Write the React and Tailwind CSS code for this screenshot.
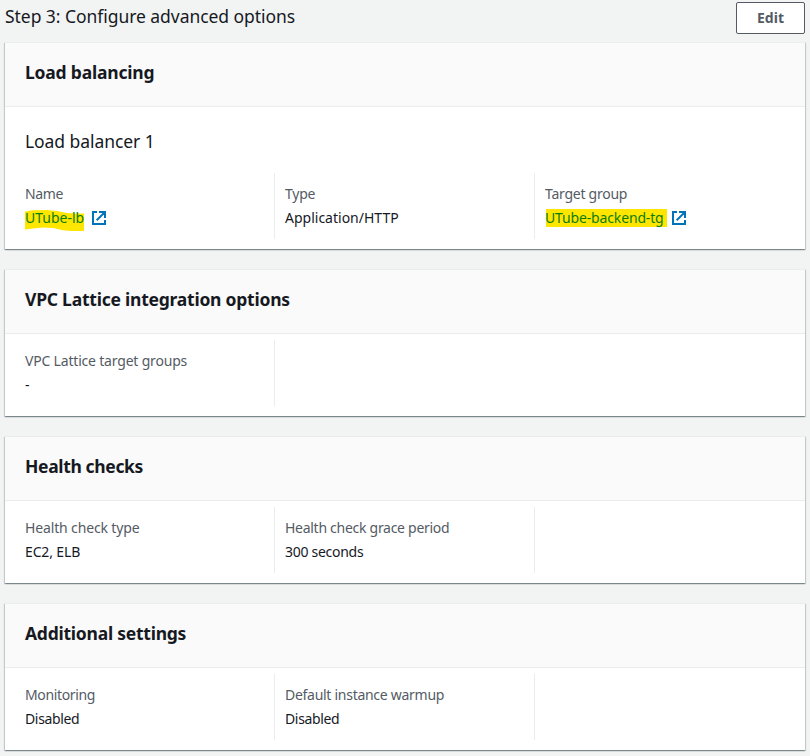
const cards = [
  {
    title: "Load balancing",
    ht: "tracking-[-0.2px]",
    subtitle: "Load balancer 1",
    fields: [
      { label: "Name", lt: "tracking-[-0.4px]", value: "UTube-lb", vt: "tracking-[0px]", link: "brush" },
      { label: "Type", lt: "tracking-[-0.25px]", value: "Application/HTTP" },
      { label: "Target group", lt: "tracking-[-0.25px]", value: "UTube-backend-tg", vt: "tracking-[-0.15px]", link: "box" },
    ],
  },
  {
    title: "VPC Lattice integration options",
    ht: "tracking-[-0.23px]",
    fields: [{ label: "VPC Lattice target groups", lt: "tracking-[-0.19px]", value: "-" }, {}],
  },
  {
    title: "Health checks",
    ht: "tracking-[-0.35px]",
    fields: [
      { label: "Health check type", lt: "tracking-[-0.14px]", value: "EC2, ELB", vt: "tracking-[-0.14px]" },
      { label: "Health check grace period", lt: "tracking-[-0.28px]", value: "300 seconds", vt: "tracking-[-0.28px]" },
      {},
    ],
  },
  {
    title: "Additional settings",
    ht: "tracking-[-0.24px]",
    fields: [
      { label: "Monitoring", lt: "tracking-[-0.35px]", value: "Disabled", vt: "tracking-[-0.35px]" },
      { label: "Default instance warmup", lt: "tracking-[-0.28px]", value: "Disabled", vt: "tracking-[-0.35px]" },
      {},
    ],
  },
];

function ExternalIcon() {
  return (
    <svg className="h-4 w-4 shrink-0" viewBox="0 0 16 16" fill="none" stroke="#0073bb" strokeWidth="2">
      <path d="M6 2H2v12h12v-4M8 2h6v6M13.6 2.4 5.7 10.3" />
    </svg>
  );
}

function Highlight({ kind }) {
  if (kind === "box") {
    return <span className="absolute top-[2px] left-[1px] h-[18px] w-[121px] bg-[#ffe600]" />;
  }
  return (
    <svg className="absolute top-0 left-0 h-[24px] w-[60px]" viewBox="0 0 60 24" fill="#ffe600">
      <path d="M0 4.5 8 3.3 22 3 32 4 42 6 50 6.5H59V24H46L38 23.2 28 21 18 20.5 8 21.5 0 22.5Z" />
    </svg>
  );
}

function Field({ field, first }) {
  return (
    <div
      className={
        first
          ? "h-[66px] w-[249px] shrink-0 pt-[10px]"
          : "h-[66px] w-[260px] shrink-0 border-l border-[#eaeded] pt-[10px] pl-[10px]"
      }
    >
      {field.label && (
        <dl className="text-[14px] leading-[22px]">
          <dt className="text-[#545b64]"><span className={field.lt}>{field.label}</span></dt>
          <dd className="mt-[2px] flex items-center text-[#16191f]">
            {field.link ? (
              <a className="relative flex items-center text-[#0a7d0a]">
                <Highlight kind={field.link} />
                <span className={"relative " + field.vt}>{field.value}</span>
                <span className="relative ml-[7px]"><ExternalIcon /></span>
              </a>
            ) : (
              <span className={field.vt}>{field.value}</span>
            )}
          </dd>
        </dl>
      )}
    </div>
  );
}

function Card({ card }) {
  return (
    <section className="border-t border-[#eaeded] bg-white shadow-[0_1px_1px_0_rgba(0,28,36,0.3),1px_1px_1px_0_rgba(0,28,36,0.15),-1px_1px_1px_0_rgba(0,28,36,0.15)]">
      <h2 className="flex h-[64px] items-center border-b border-[#eaeded] bg-[#fafafa] px-5 pb-[4px] text-[17.5px] font-bold text-[#16191f]">
        <span className={card.ht}>{card.title}</span>
      </h2>
      {card.subtitle && (
        <h3 className="px-5 pt-[23px] pb-[15px] text-[17.5px] leading-[22px] tracking-[-0.07px] text-[#16191f]">
          {card.subtitle}
        </h3>
      )}
      <div className="flex px-5 pt-[6px] pb-[10px]">
        {card.fields.map((field, i) => (
          <Field key={i} field={field} first={i === 0} />
        ))}
      </div>
    </section>
  );
}

export default function App() {
  return (
    <main className="h-[756px] w-[810px] overflow-hidden bg-[#f2f3f3] px-[5px] font-['Noto_Sans',sans-serif]">
      <header className="flex h-[42px] items-start justify-between pt-[2px]">
        <h1 className="mt-[1px] text-[17.5px] leading-[26px] tracking-[-0.05px] text-[#16191f]">
          Step 3: Configure advanced options
        </h1>
        <button className="h-[32px] w-[69px] rounded-[2px] border border-[#545b64] bg-white text-[14px] leading-[22px] font-bold text-[#545b64]">
          Edit
        </button>
      </header>
      <div className="flex flex-col gap-5">
        {cards.map((card) => (
          <Card key={card.title} card={card} />
        ))}
      </div>
    </main>
  );
}
